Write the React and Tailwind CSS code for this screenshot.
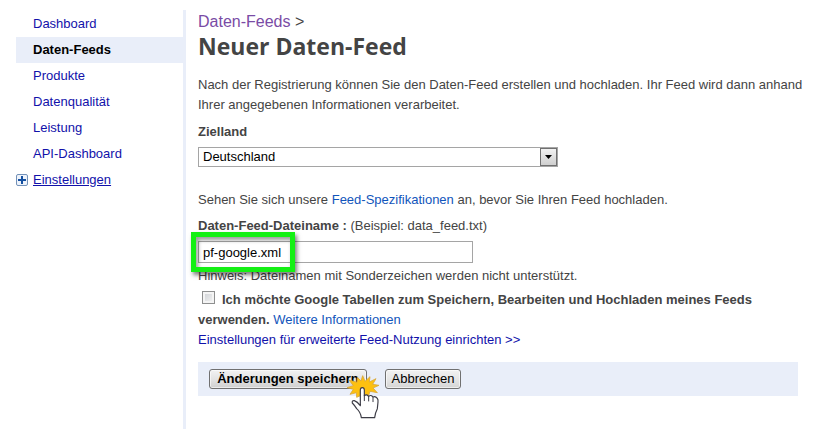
import React from 'react';

const navItems = ['Dashboard', 'Daten-Feeds', 'Produkte', 'Datenqualität', 'Leistung', 'API-Dashboard'];

function Sidebar() {
  return (
    <nav className="w-[170px] shrink-0 border-r-[3px] border-[#e9eef9] pt-px">
      <ul>
        {navItems.map((item) => (
          <li key={item} className={item === 'Daten-Feeds' ? 'bg-[#e9eef9] pl-[17px]' : 'pl-[17px]'}>
            <a
              href="#"
              className={
                item === 'Daten-Feeds'
                  ? 'block leading-[26px] font-bold text-black'
                  : 'block leading-[26px] text-[#1111aa]'
              }
            >
              {item}
            </a>
          </li>
        ))}
        <li className="flex items-center gap-[5px] leading-[26px]">
          <svg width="12" height="12" viewBox="0 0 12 12" aria-hidden="true">
            <rect x="0.5" y="0.5" width="11" height="11" rx="1.5" fill="#eef3fb" stroke="#7391b8" />
            <path d="M2 6h8M6 2v8" stroke="#1450a0" strokeWidth="2" />
          </svg>
          <a href="#" className="text-[#1111aa] underline">Einstellungen</a>
        </li>
      </ul>
    </nav>
  );
}

function ClickCursor() {
  return (
    <svg className="pointer-events-none absolute top-[6px] left-[137px]" width="34" height="45" viewBox="12 15 102 135" aria-hidden="true">
      <path
        d="M62 17L69 34L84 20L82 36L102 26L92 43L111 46L93 54L106 68L84 64L80 76L62 74L44 82L43 68L24 73L34 58L15 53L34 47L21 30L45 37L46 22L57 33Z"
        fill="#fdc010"
        stroke="#d8a83c"
        strokeWidth="2.5"
        strokeLinejoin="round"
      />
      <path
        d="M55 96V60Q55 53 61 53Q67 53 67 60V77Q74 71 80 79Q87 73 93 81Q100 77 106 85Q109 89 108 96L106 116Q100 127 98 143H58Q56 127 44 116Q36 104 31 99Q29 91 37 92Q46 95 55 107Z"
        fill="#fff"
        stroke="#3c3c46"
        strokeWidth="3.5"
        strokeLinejoin="round"
      />
      <path d="M67 76V92M80 79V93M93 82V95" stroke="#3c3c46" strokeWidth="3" fill="none" strokeLinecap="round" />
    </svg>
  );
}

export default function App() {
  return (
    <div className="flex min-h-screen bg-white pt-[10px] pl-4 font-['Liberation_Sans',Arial,sans-serif] text-[13px] leading-5 text-[#444]">
      <Sidebar />
      <main className="min-w-0 flex-1 pr-[21px] pl-3">
        <div className="text-base leading-6">
          <a href="#" className="text-[#7a4ba5]">Daten-Feeds</a> &gt;
        </div>
        <h1 className="font-['Open_Sans',sans-serif] text-[23px] leading-6 font-bold">Neuer Daten-Feed</h1>

        <form onSubmit={(e) => e.preventDefault()}>
          <p className="-mr-4 mt-[17px]">
            Nach der Registrierung können Sie den Daten-Feed erstellen und hochladen. Ihr Feed wird dann anhand Ihrer
            angegebenen Informationen verarbeitet.
          </p>
          <label htmlFor="country" className="mt-[7px] block font-bold">Zielland</label>
          <div className="relative mt-[5px] w-[360px]">
            <select
              id="country"
              className="block h-5 w-full appearance-none border border-[#a5a5a5] bg-white pl-1 text-[13px] leading-[18px] text-black"
            >
              <option>Deutschland</option>
            </select>
            <span className="pointer-events-none absolute top-px right-px flex h-[18px] w-[17px] items-center justify-center border border-[#707070] bg-linear-to-b from-[#f2f2f2] to-[#cfcfcf]">
              <svg width="7" height="4" viewBox="0 0 7 4" aria-hidden="true">
                <path d="M0 0h7L3.500 4z" fill="#000" />
              </svg>
            </span>
          </div>

          <p className="mt-[23px]">
            Sehen Sie sich unsere <a href="#" className="text-[#1155bb]">Feed-Spezifikationen</a> an, bevor Sie Ihren
            Feed hochladen.
          </p>
          <div className="mt-[6px]">
            <label htmlFor="filename" className="font-bold">Daten-Feed-Dateiname :</label> (Beispiel: data_feed.txt)
          </div>
          <div className="relative mt-[5px] w-[275px]">
            <input
              id="filename"
              type="text"
              defaultValue="pf-google.xml"
              className="block h-[22px] w-full border border-[#a5a5a5] bg-white px-1 text-[13px] text-black"
            />
            <div className="pointer-events-none absolute -top-[9px] -left-[7px] z-10 h-10 w-[104px] border-[5px] border-[#14f014] shadow-[2px_3px_4px_rgba(0,0,0,0.5),inset_2px_3px_4px_rgba(0,0,0,0.4)]" />
          </div>
          <p className="mt-[3px]">Hinweis: Dateinamen mit Sonderzeichen werden nicht unterstützt.</p>

          <div className="mt-1">
            <input
              id="tables"
              type="checkbox"
              className="mr-[7px] ml-1 h-[13px] w-[13px] appearance-none border border-[#8e8f8f] bg-linear-to-br from-[#cccfd3] to-[#f5f5f5] shadow-[inset_0_0_0_2px_#f4f4f4]"
            />
            <label htmlFor="tables" className="font-bold">
              Ich möchte Google Tabellen zum Speichern, Bearbeiten und Hochladen meines Feeds verwenden.
            </label>{' '}
            <a href="#" className="text-[#1155bb]">Weitere Informationen</a>
          </div>
          <a href="#" className="block text-[#1111aa]">Einstellungen für erweiterte Feed-Nutzung einrichten &gt;&gt;</a>

          <div className="mt-3 flex gap-[18px] bg-[#e9eef9] px-[11px] py-[7px]">
            <div className="relative">
              <button
                type="submit"
                className="block h-5 w-[158px] rounded-[3px] border border-[#707070] bg-linear-to-b from-[#f2f2f2] via-[#e4e4e4] to-[#cfcfcf] leading-[18px] font-bold whitespace-nowrap text-black shadow-[inset_0_0_0_1px_rgba(255,255,255,0.6)]"
              >
                Änderungen speichern
              </button>
              <ClickCursor />
            </div>
            <button
              type="button"
              className="h-5 w-[76px] rounded-[3px] border border-[#707070] bg-linear-to-b from-[#f2f2f2] via-[#e6e6e6] to-[#d4d4d4] leading-[18px] text-black shadow-[inset_0_0_0_1px_rgba(255,255,255,0.6)]"
            >
              Abbrechen
            </button>
          </div>
        </form>
      </main>
    </div>
  );
}
